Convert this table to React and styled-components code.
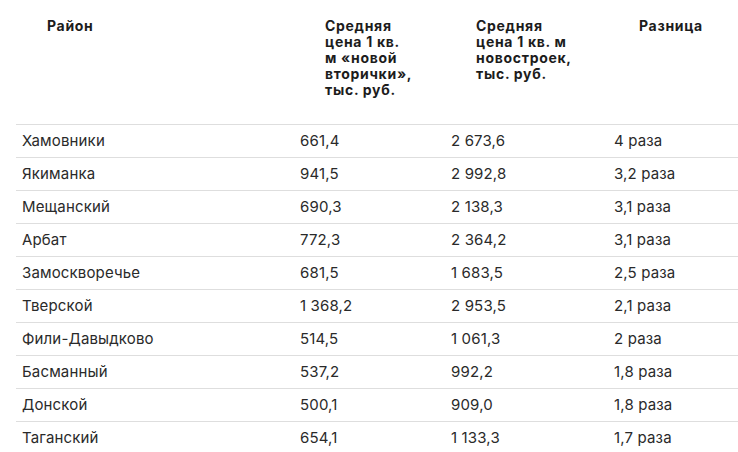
import React from 'react'
import styled, { createGlobalStyle } from 'styled-components'

const GlobalStyle = createGlobalStyle`
    body {
        margin: 0;
        background: #ffffff;
        font-family: Inter, "Liberation Sans", Arial, sans-serif;
    }
`

const Wrapper = styled.div`
    padding-left: 16px;
    width: 722px;
`

const Row = styled.div`
    display: grid;
    grid-template-columns: 278px 151px 163px 1fr;
    border-top: ${props => (props.head ? 'none' : '1px solid #dedede')};
    height: ${props => (props.head ? '124px' : '32px')};
    align-items: ${props => (props.head ? 'start' : 'center')};
`

const HeadCell = styled.div`
    padding: 18px 0 0 31px;
    font-size: 14px;
    line-height: 16px;
    font-weight: 700;
    letter-spacing: 0.7px;
    color: #1c1c1c;
`

const Cell = styled.div`
    padding: 0 0 1px 6px;
    font-size: 15px;
    letter-spacing: 0.15px;
    color: #2a2a2a;
    white-space: nowrap;
`

const rows = [
    ['Хамовники', '661,4', '2 673,6', '4 раза'],
    ['Якиманка', '941,5', '2 992,8', '3,2 раза'],
    ['Мещанский', '690,3', '2 138,3', '3,1 раза'],
    ['Арбат', '772,3', '2 364,2', '3,1 раза'],
    ['Замоскворечье', '681,5', '1 683,5', '2,5 раза'],
    ['Тверской', '1 368,2', '2 953,5', '2,1 раза'],
    ['Фили-Давыдково', '514,5', '1 061,3', '2 раза'],
    ['Басманный', '537,2', '992,2', '1,8 раза'],
    ['Донской', '500,1', '909,0', '1,8 раза'],
    ['Таганский', '654,1', '1 133,3', '1,7 раза'],
]

const App = () => (
    <Wrapper>
        <GlobalStyle />
        <Row head>
            <HeadCell>Район</HeadCell>
            <HeadCell>
                Средняя<br />цена 1 кв.<br />м «новой<br />вторички»,<br />тыс. руб.
            </HeadCell>
            <HeadCell>
                Средняя<br />цена 1 кв. м<br />новостроек,<br />тыс. руб.
            </HeadCell>
            <HeadCell>Разница</HeadCell>
        </Row>
        {rows.map(r => (
            <Row key={r[0]}>
                {r.map((v, i) => (
                    <Cell key={i}>{v}</Cell>
                ))}
            </Row>
        ))}
    </Wrapper>
)

export default App
